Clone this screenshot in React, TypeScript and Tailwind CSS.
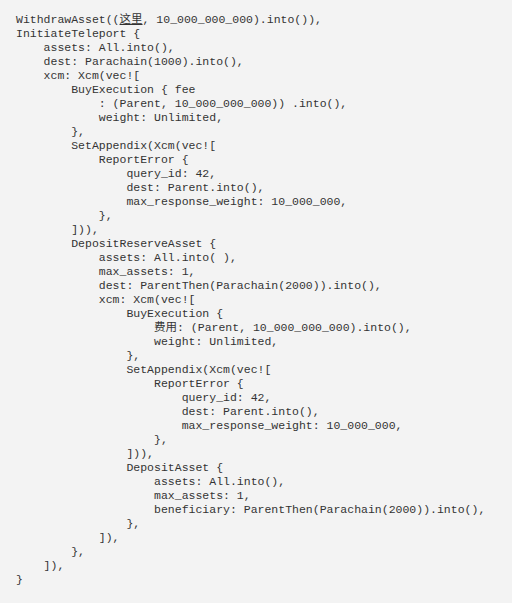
const lines: string[] = [
  "WithdrawAsset((@@, 10_000_000_000).into()),",
  "InitiateTeleport {",
  "    assets: All.into(),",
  "    dest: Parachain(1000).into(),",
  "    xcm: Xcm(vec![",
  "        BuyExecution { fee",
  "            : (Parent, 10_000_000_000)) .into(),",
  "            weight: Unlimited,",
  "        },",
  "        SetAppendix(Xcm(vec![",
  "            ReportError {",
  "                query_id: 42,",
  "                dest: Parent.into(),",
  "                max_response_weight: 10_000_000,",
  "            },",
  "        ])),",
  "        DepositReserveAsset {",
  "            assets: All.into( ),",
  "            max_assets: 1,",
  "            dest: ParentThen(Parachain(2000)).into(),",
  "            xcm: Xcm(vec![",
  "                BuyExecution {",
  "                    费用: (Parent, 10_000_000_000).into(),",
  "                    weight: Unlimited,",
  "                },",
  "                SetAppendix(Xcm(vec![",
  "                    ReportError {",
  "                        query_id: 42,",
  "                        dest: Parent.into(),",
  "                        max_response_weight: 10_000_000,",
  "                    },",
  "                ])),",
  "                DepositAsset {",
  "                    assets: All.into(),",
  "                    max_assets: 1,",
  "                    beneficiary: ParentThen(Parachain(2000)).into(),",
  "                },",
  "            ]),",
  "        },",
  "    ]),",
  "}",
];

function Line({ text }: { text: string }) {
  if (text.includes("@@")) {
    const [a, b] = text.split("@@");
    return (
      <div>
        {a}
        <span className="underline">这里</span>
        {b}
      </div>
    );
  }
  return <div>{text}</div>;
}

export default function App() {
  return (
    <div className="h-[603px] w-full bg-[#f3f3f3]">
      <pre
        className="pl-4 pt-[13px] text-[11.5px] leading-[14px] text-[#333333] whitespace-pre"
        style={{ fontFamily: '"Liberation Mono", "Noto Sans CJK SC", monospace' }}
      >
        {lines.map((l, i) => (
          <Line key={i} text={l} />
        ))}
      </pre>
    </div>
  );
}
